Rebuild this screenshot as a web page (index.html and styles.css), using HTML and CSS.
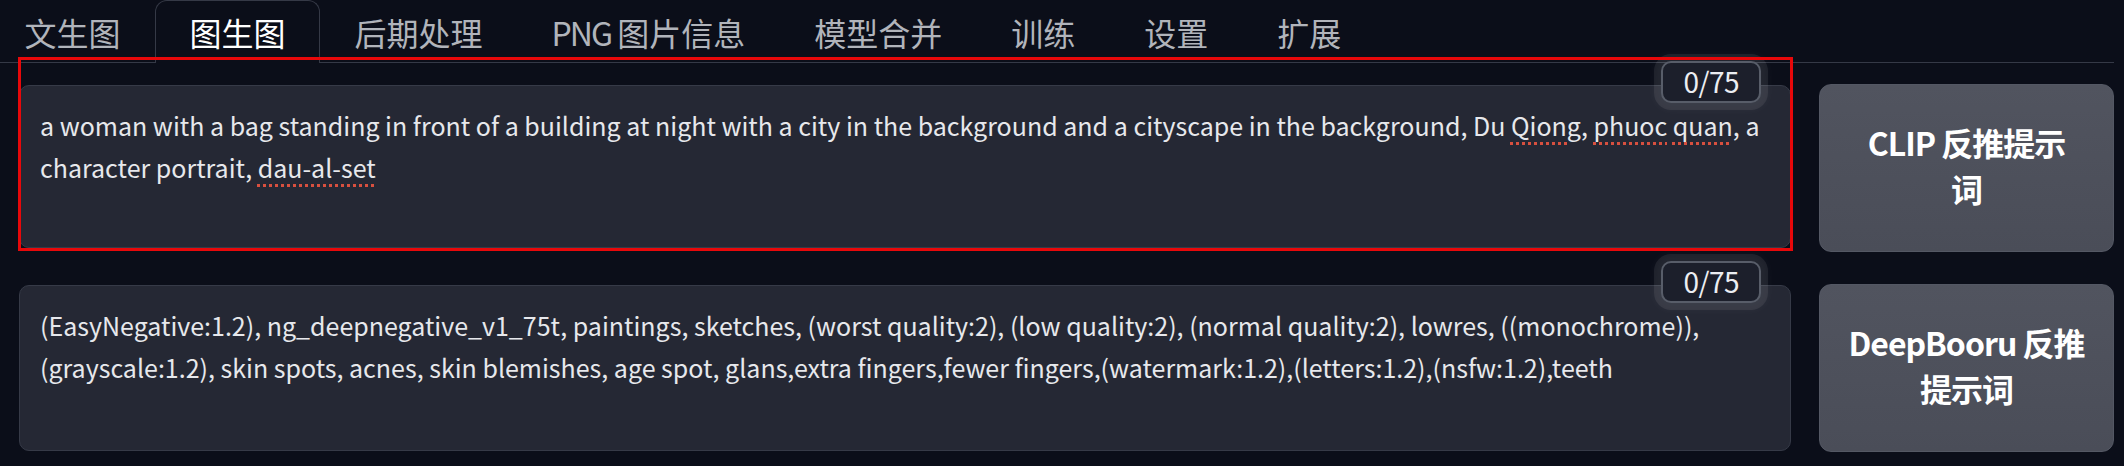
FILE: index.html
```html
<!DOCTYPE html>
<html lang="zh-CN">
<head>
<meta charset="utf-8">
<title>img2img</title>
<link rel="stylesheet" href="styles.css">
</head>
<body>
<div class="app">
  <nav class="tabs">
    <button class="tab">文生图</button>
    <button class="tab active">图生图</button>
    <button class="tab">后期处理</button>
    <button class="tab tab-mixed"><span class="latin">PNG</span> 图片信息</button>
    <button class="tab">模型合并</button>
    <button class="tab">训练</button>
    <button class="tab">设置</button>
    <button class="tab">扩展</button>
  </nav>

  <div class="row">
    <div class="field">
      <div class="textbox">a woman with a bag standing in front of a building at night with a city in the background and a cityscape in the background, Du <span class="spell">Qiong</span>, <span class="spell">phuoc</span> <span class="spell">quan</span>, a character portrait, <span class="spell">dau-al-set</span></div>
      <span class="counter">0/75</span>
      <div class="highlight"></div>
    </div>
    <button class="interrogate">CLIP 反推提示<br>词</button>
  </div>

  <div class="row">
    <div class="field">
      <div class="textbox tall">(EasyNegative:1.2), ng_deepnegative_v1_75t, paintings, sketches, (worst quality:2), (low quality:2), (normal quality:2), lowres, ((monochrome)), (grayscale:1.2), skin spots, acnes, skin blemishes, age spot, glans,extra fingers,fewer fingers,(watermark:1.2),(letters:1.2),(nsfw:1.2),teeth</div>
      <span class="counter">0/75</span>
    </div>
    <button class="interrogate">DeepBooru 反推<br>提示词</button>
  </div>
</div>
</body>
</html>
```

FILE: styles.css
```css
* {
  box-sizing: border-box;
}

html, body {
  margin: 0;
  padding: 0;
  background: #0b0e19;
  overflow: hidden;
}

body {
  width: 2124px;
  height: 466px;
  font-family: "Noto Sans CJK SC", "Noto Sans", sans-serif;
  color: #e6e7eb;
}

.app {
  padding: 0 10px 0 0;
}

.tabs {
  display: flex;
  height: 63px;
  margin-left: -10px;
  border-bottom: 1px solid #353946;
}

.tab {
  height: 63px;
  margin-bottom: -1px;
  padding: 0 33.5px;
  border: 1px solid transparent;
  border-bottom: none;
  border-radius: 12px 12px 0 0;
  background: transparent;
  font-family: inherit;
  font-size: 32px;
  line-height: 60px;
  color: #b1b4bb;
  white-space: nowrap;
}

.tab.active {
  border-color: #353946;
  background: #0b0e19;
  color: #ffffff;
}

.tab-mixed {
  word-spacing: -1px;
}

.latin {
  letter-spacing: -2px;
}

.row {
  display: flex;
  gap: 28px;
  height: 168px;
  margin-top: 21px;
  padding-left: 19px;
}

.row + .row {
  margin-top: 32px;
}

.field {
  position: relative;
  flex: 1;
  padding-top: 1px;
}

.textbox {
  height: 163px;
  padding: 18px 6px 0 20px;
  border: 1px solid #363a47;
  border-radius: 10px;
  background: #252834;
  font-size: 25px;
  line-height: 42px;
  color: #e7e8ec;
}

.textbox.tall {
  height: 166px;
  padding-top: 18px;
}

.spell {
  text-decoration: underline dotted #d8503f;
  text-decoration-thickness: 3px;
  text-underline-offset: 6px;
}

.counter {
  position: absolute;
  top: -23px;
  right: 30px;
  height: 42px;
  padding: 0 20px;
  border: 2px solid #585d69;
  border-radius: 10px;
  background: #1c1f2b;
  font-size: 28px;
  line-height: 37px;
  letter-spacing: -0.5px;
  color: #eceef2;
  box-shadow: 0 0 0 7px rgba(255, 255, 255, 0.07), 0 0 10px 7px rgba(255, 255, 255, 0.04);
}

.highlight {
  position: absolute;
  top: -27px;
  left: -1px;
  right: -2px;
  bottom: 1px;
  border: 3px solid #e8080a;
  pointer-events: none;
}

.interrogate {
  width: 295px;
  flex: none;
  padding: 0 0 7px;
  border: 1px solid #545864;
  border-radius: 12px;
  background: linear-gradient(180deg, #51545f 0%, #4a4d58 100%);
  font-family: inherit;
  font-size: 32px;
  font-weight: 700;
  line-height: 46px;
  letter-spacing: -1px;
  color: #ffffff;
}
```
